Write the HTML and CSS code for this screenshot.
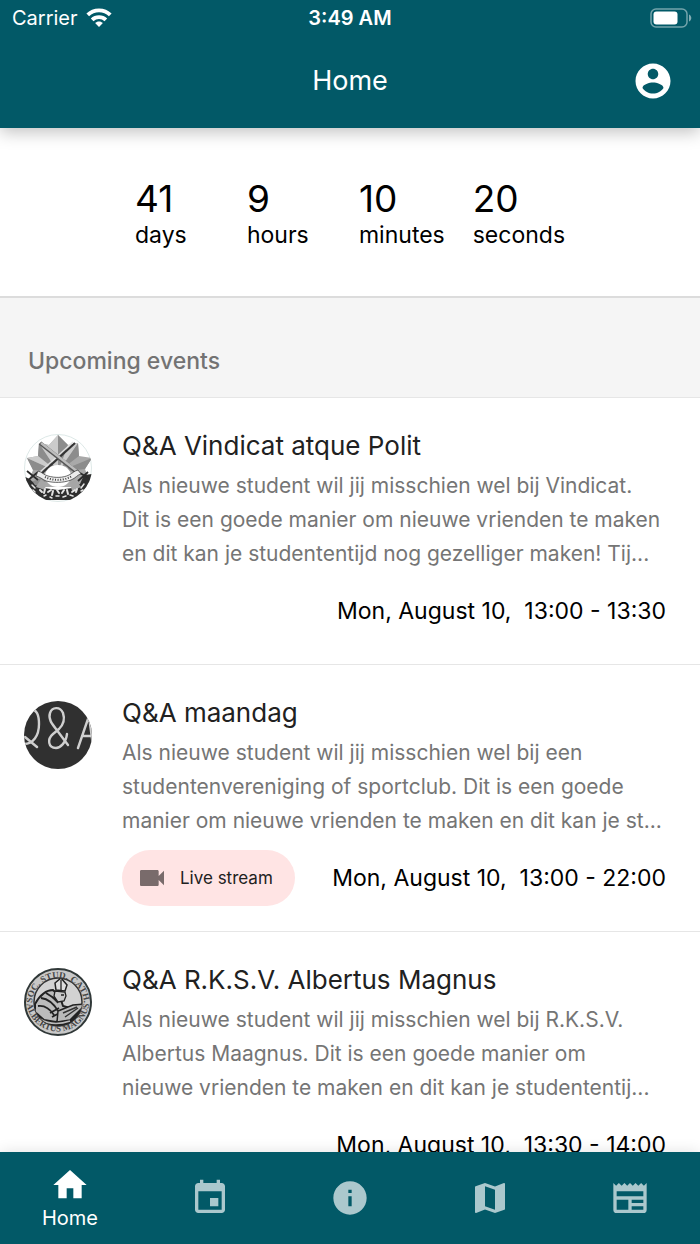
FILE: index.html
```html
<!DOCTYPE html>
<html lang="nl">
<head>
    <meta charset="UTF-8">
    <meta name="viewport" content="width=device-width, initial-scale=1.0">
    <title>Home</title>
    <link rel="stylesheet" href="styles.css">
</head>
<body>
    <header class="app-header">
        <div class="status-bar">
            <div class="carrier">
                <span>Carrier</span>
                <svg class="wifi" viewBox="0 0 26 20" aria-hidden="true">
                    <path d="M13 .5C8 .5 3.600 2.400.4 5.500l2.700 2.800a14 14 0 0 1 19.800 0L25.600 5.500C22.400 2.400 18 .5 13 .5z"/>
                    <path d="M13 7.300c-3.200 0-6.100 1.200-8.200 3.200l2.700 2.700a7.800 7.800 0 0 1 11 0l2.700-2.700A11.900 11.900 0 0 0 13 7.300z"/>
                    <path d="M13 13.600c-1.500 0-2.900.6-3.900 1.500L13 19l3.900-3.900c-1-.9-2.400-1.500-3.900-1.500z"/>
                </svg>
            </div>
            <span class="clock">3:49 AM</span>
            <svg class="battery" viewBox="0 0 42 20" aria-hidden="true">
                <rect x="1" y="1" width="36" height="18" rx="5" fill="none" stroke="#fff" stroke-opacity=".45" stroke-width="1.500"/>
                <rect x="3.500" y="3.500" width="24" height="13" rx="3" fill="#fff"/>
                <path d="M39 6.500c1.500.6 2.300 2 2.300 3.500s-.8 2.900-2.300 3.500z" fill="#fff" fill-opacity=".5"/>
            </svg>
        </div>
        <div class="toolbar">
            <h1>Home</h1>
            <button class="account" type="button" aria-label="Account">
                <svg viewBox="0 0 24 24" aria-hidden="true"><path d="M12 2C6.480 2 2 6.480 2 12s4.480 10 10 10 10-4.480 10-10S17.520 2 12 2zm0 3c1.660 0 3 1.340 3 3s-1.340 3-3 3-3-1.340-3-3 1.340-3 3-3zm0 14.200c-2.500 0-4.710-1.280-6-3.220.03-1.990 4-3.080 6-3.080 1.990 0 5.970 1.090 6 3.080-1.290 1.940-3.500 3.220-6 3.220z"/></svg>
            </button>
        </div>
    </header>

    <main class="content">
        <section class="countdown">
            <div class="unit"><span class="value">41</span><span class="label">days</span></div>
            <div class="unit"><span class="value">9</span><span class="label">hours</span></div>
            <div class="unit"><span class="value">10</span><span class="label">minutes</span></div>
            <div class="unit"><span class="value">20</span><span class="label">seconds</span></div>
        </section>

        <h2 class="section-title">Upcoming events</h2>

        <article class="event">
            <!-- silver star with crossed swords -->
            <svg class="avatar" viewBox="0 0 68 68" aria-hidden="true">
                <defs>
                    <clipPath id="round"><circle cx="34" cy="34" r="34"/></clipPath>
                </defs>
                <circle cx="34" cy="34" r="33.500" fill="#fff" stroke="#cfdedd" stroke-width=".7"/>
                <g clip-path="url(#round)">
                    <path d="M34 1l10 10 10-2 1 13 13 2-7 11 5 14-12 4H14L4 49l5-13-6-12 11-2 1-13 10 2z" fill="#a9a9a9"/>
                    <g fill="#8c8c8c">
                        <path d="M34 1l10 10-10 27zM54 9l1 13-21 16zM68 24l-7 11-27 3zM15 9l-1 13 20 16zM3 24l6 12 25 2zM4 49l10 4 20-15z"/>
                    </g>
                    <g fill="#cbcbcb">
                        <path d="M34 1l-9 10 9 27zM15 9l10 2 9 27zM3 24l11-2 20 16zM54 9l-10 2-10 27z"/>
                    </g>
                    <path d="M51 9L17 40" stroke="#333" stroke-width="2.200"/>
                    <path d="M49 8L16 38" stroke="#e2e2e2" stroke-width="1.200"/>
                    <path d="M16 9l38 30" stroke="#555" stroke-width="4"/>
                    <path d="M17 9l37 29" stroke="#bdbdbd" stroke-width="2.400"/>
                    <ellipse cx="34" cy="42" rx="13" ry="11" fill="#fff"/>
                    <path d="M1 43c6 2 8 5 10 8l9 3 14 2 14-2 8-4 4-9 8-1-3 16-8 6-8 4H20l-8-5-8-6z" fill="#2e2e2e"/>
                    <path d="M17 45l5 4-1 7-9-3zM51 45l-5 4 2 8 9-4z" fill="#a6a6a6"/>
                    <path d="M3 37l11 9M14 38L3 47M64 38l-10 9M66 45l-10-6" stroke="#2b2b2b" stroke-width="1.800"/>
                    <path d="M14 37c4 1 6 4 10 5 7 2 15 2 21-1 4-2 5-4 9-5l3 4c-4 1-5 4-10 6-8 3-17 3-25 1-4-2-6-4-10-5z" fill="#ececec" stroke="#444" stroke-width=".8"/>
                    <path d="M21 43c8 4 19 4 27-1" fill="none" stroke="#444" stroke-width="2" stroke-dasharray="1 1.600"/>
                    <g fill="none" stroke="#e4e4e4" stroke-linecap="round">
                        <path d="M16 56l2 2M21 55l-1 4M24 58l3-2M29 57l-1 4M33 56l2 3M38 59l2-3M43 56l1 4M48 58l3-2M53 55l-1 3" stroke-width="2"/>
                        <path d="M20 62l2-1M26 63l2 1M32 62h3M39 63l3-1M46 61l3 1M8 51l3 3M60 50l-3 4M57 57l2-1M11 58l-2-2" stroke-width="1.500"/>
                    </g>
                </g>
            </svg>
            <div class="event-body">
                <h3>Q&amp;A Vindicat atque Polit</h3>
                <p>Als nieuwe student wil jij misschien wel bij Vindicat. Dit is een goede manier om nieuwe vrienden te maken en dit kan je studententijd nog gezelliger maken! Tij...</p>
                <div class="event-footer">
                    <time datetime="2020-08-10T13:00">Mon, August 10,&nbsp; 13:00 - 13:30</time>
                </div>
            </div>
        </article>

        <article class="event">
            <!-- chalk lettering on a blackboard -->
            <svg class="avatar" viewBox="0 0 68 68" aria-hidden="true">
                <circle cx="34" cy="34" r="34" fill="#303030"/>
                <g clip-path="url(#round)" fill="none" stroke="#cfcfcf" stroke-width="2.400" stroke-linecap="round">
                    <path d="M6 9c7-2 9 6 9 14C15 35 9 43 0 43M1 36l12 10"/>
                    <path d="M43 33c-1 9-7 14-11 14-8 0-9-9-3-14l6-5c5-5 6-10 4-16-3-7-11-6-13 0-2 6 2 11 6 16l12 16"/>
                    <path d="M54 47l11-32 4 30M58 35h10"/>
                </g>
            </svg>
            <div class="event-body">
                <h3>Q&amp;A maandag</h3>
                <p>Als nieuwe student wil jij misschien wel bij een studentenvereniging of sportclub. Dit is een goede manier om nieuwe vrienden te maken en dit kan je st...</p>
                <div class="event-footer">
                    <button class="chip" type="button">
                        <svg viewBox="0 0 24 24" aria-hidden="true"><path d="M17 10.500V7c0-.55-.45-1-1-1H4c-.55 0-1 .45-1 1v10c0 .55.45 1 1 1h12c.55 0 1-.45 1-1v-3.500l4 4v-11l-4 4z"/></svg>
                        Live stream
                    </button>
                    <time datetime="2020-08-10T13:00">Mon, August 10,&nbsp; 13:00 - 22:00</time>
                </div>
            </div>
        </article>

        <article class="event">
            <!-- round seal with a bishop -->
            <svg class="avatar" viewBox="0 0 68 68" aria-hidden="true">
                <defs>
                    <path id="seal-top" d="M8 36a26 26 0 0 1 52 0"/>
                    <path id="seal-bottom" d="M2.500 32a31.500 31.500 0 0 0 63 0"/>
                    <clipPath id="seal"><circle cx="34" cy="34" r="24"/></clipPath>
                </defs>
                <circle cx="34" cy="34" r="33" fill="#c8c8c8" stroke="#303838" stroke-width="2"/>
                <circle cx="34" cy="34" r="24" fill="#d2d2d2" stroke="#333" stroke-width="1.500"/>
                <g class="seal-text">
                    <text><textPath href="#seal-top" startOffset="50%" text-anchor="middle">SOC. STUD. CATH.</textPath></text>
                    <text><textPath href="#seal-bottom" startOffset="50%" text-anchor="middle">ALBERTUS MAGNUS</textPath></text>
                </g>
                <g clip-path="url(#seal)">
                    <path d="M8 38l12 6 13 8 11 1 16-15v24H8z" fill="#222"/>
                    <path d="M11 36c5-9 11-14 18-14l7 7 3 9 7 2-3 9-11 5-12-2-9-8z" fill="#bbb" stroke="#222" stroke-width="2"/>
                    <path d="M17 30c8 1 13 6 17 13M14 38c7-1 12 3 16 9M22 25l11 7M26 45l9-5M28 49l13-7" fill="none" stroke="#222" stroke-width="1.800"/>
                    <path d="M32 22l-1-7 6-5 6 7-2 6z" fill="#ddd" stroke="#222" stroke-width="1.500"/>
                    <path d="M31 23l10 1 1 4-2 5-6 1-4-6z" fill="#c9c9c9" stroke="#222" stroke-width="1.300"/>
                    <path d="M37 12v10M37 27h3M28 29l6 6" stroke="#222" stroke-width="1.300"/>
                    <path d="M34 43l15-6 13-1-16 16-13 2z" fill="#bbb" stroke="#222" stroke-width="1.500"/>
                    <path d="M39 45l14-6M41 49l13-9" stroke="#333" stroke-width="1.500"/>
                    <path d="M16 51c8 5 18 6 30 2" fill="none" stroke="#bbb" stroke-width="1.500"/>
                </g>
            </svg>
            <div class="event-body">
                <h3>Q&amp;A R.K.S.V. Albertus Magnus</h3>
                <p>Als nieuwe student wil jij misschien wel bij R.K.S.V. Albertus Maagnus. Dit is een goede manier om nieuwe vrienden te maken en dit kan je studententij...</p>
                <div class="event-footer">
                    <time datetime="2020-08-10T13:30">Mon, August 10,&nbsp; 13:30 - 14:00</time>
                </div>
            </div>
        </article>
    </main>

    <nav class="tab-bar">
        <a class="tab active" href="#home">
            <svg viewBox="0 0 24 24" aria-hidden="true"><path d="M10 20v-6h4v6h5v-8h3L12 3 2 12h3v8z"/></svg>
            <span>Home</span>
        </a>
        <a class="tab" href="#agenda" aria-label="Agenda">
            <svg viewBox="0 0 24 24" aria-hidden="true"><path d="M17 12h-5v5h5v-5zM16 1v2H8V1H6v2H5c-1.110 0-1.990.9-1.990 2L3 19c0 1.100.89 2 2 2h14c1.100 0 2-.9 2-2V5c0-1.100-.9-2-2-2h-1V1h-2zm3 18H5V8h14v11z"/></svg>
        </a>
        <a class="tab" href="#info" aria-label="Info">
            <svg viewBox="0 0 24 24" aria-hidden="true"><path d="M12 2C6.480 2 2 6.480 2 12s4.480 10 10 10 10-4.480 10-10S17.520 2 12 2zm1 15h-2v-6h2v6zm0-8h-2V7h2v2z"/></svg>
        </a>
        <a class="tab" href="#map" aria-label="Map">
            <svg viewBox="0 0 24 24" aria-hidden="true"><path d="M20.500 3l-.16.03L15 5.100 9 3 3.360 4.900c-.21.07-.36.25-.36.48V20.500c0 .28.22.5.5.5l.16-.03L9 18.900l6 2.100 5.640-1.900c.21-.07.36-.25.36-.48V3.500c0-.28-.22-.5-.5-.5zM15 19l-6-2.110V5l6 2.110V19z"/></svg>
        </a>
        <a class="tab" href="#news" aria-label="News">
            <svg viewBox="0 0 24 24" aria-hidden="true"><path d="M20 11H4V8h16M20 15h-7v-2h7M20 19h-7v-2h7M11 19H4v-6h7M20.330 4.670L18.670 3 17 4.670 15.330 3l-1.660 1.670L12 3l-1.670 1.670L8.670 3 7 4.670 5.330 3 3.670 4.670 2 3v16a2 2 0 0 0 2 2h16a2 2 0 0 0 2-2V3z" fill-rule="evenodd"/></svg>
        </a>
    </nav>
</body>
</html>
```

FILE: styles.css
```css
* {
    margin: 0;
    padding: 0;
    box-sizing: border-box;
}

body {
    font-family: Inter, 'Liberation Sans', sans-serif;
    background: #fff;
    color: #000;
    height: 100vh;
    display: flex;
    flex-direction: column;
}

button {
    font: inherit;
    border: none;
    cursor: pointer;
}

/* Header */
.app-header {
    background: #025967;
    color: #fff;
    box-shadow: 0 4px 16px rgba(0, 0, 0, 0.25);
    z-index: 1;
}

.status-bar {
    display: grid;
    grid-template-columns: 1fr auto 1fr;
    align-items: center;
    height: 36px;
    padding: 0 8px;
    font-size: 20px;
}

.carrier {
    display: flex;
    align-items: center;
    gap: 8px;
    padding-left: 4px;
}

.wifi {
    width: 26px;
    height: 20px;
    fill: #fff;
}

.clock {
    font-weight: 600;
}

.battery {
    width: 42px;
    height: 20px;
    justify-self: end;
}

.toolbar {
    display: grid;
    grid-template-columns: 1fr auto 1fr;
    align-items: center;
    padding: 24px 26px 26px;
}

.toolbar h1 {
    grid-column: 2;
    font-size: 27px;
    font-weight: 400;
    line-height: 32px;
}

.account {
    justify-self: end;
    width: 42px;
    height: 42px;
    background: none;
}

.account svg {
    display: block;
    fill: #fff;
}

/* Scroll area */
.content {
    flex: 1;
    min-height: 0;
    overflow: hidden;
}

.countdown {
    display: flex;
    justify-content: center;
    gap: 28px;
    padding: 49px 24px 47px;
    border-bottom: 2px solid #dcdcdc;
}

.unit {
    display: flex;
    flex-direction: column;
    min-width: 84px;
}

.value {
    font-size: 37px;
    line-height: 44px;
}

.label {
    font-size: 23px;
    line-height: 28px;
}

.section-title {
    padding: 48px 28px 21px;
    background: #f5f5f5;
    color: #737373;
    font-size: 23px;
    font-weight: 500;
    line-height: 30px;
}

.event {
    display: flex;
    gap: 30px;
    padding: 31px 24px 25px;
    border-top: 1px solid #e6e6e6;
}

.avatar {
    flex: none;
    width: 68px;
    height: 68px;
    margin-top: 5px;
}

.seal-text {
    font-family: 'Liberation Serif', serif;
    font-size: 9px;
    font-weight: 700;
    fill: #444;
}

.event-body {
    flex: 1;
    min-width: 0;
}

.event h3 {
    font-size: 26px;
    font-weight: 400;
    line-height: 34px;
    color: #212121;
}

.event p {
    margin: 6px 0 12px;
    padding-right: 14px;
    font-size: 21px;
    line-height: 34px;
    color: #757575;
}

.event-footer {
    display: flex;
    align-items: center;
    height: 56px;
    padding-right: 10px;
}

.event-footer time {
    margin-left: auto;
    font-size: 23px;
    white-space: nowrap;
}

.chip {
    display: flex;
    align-items: center;
    gap: 12px;
    height: 56px;
    padding: 0 22px 0 14px;
    border-radius: 28px;
    background: #ffe4e4;
    color: #212121;
    font-size: 17px;
}

.chip svg {
    width: 32px;
    fill: #796b6b;
}

/* Bottom navigation */
.tab-bar {
    display: flex;
    height: 92px;
    background: #025967;
    box-shadow: 0 0 14px rgba(0, 0, 0, 0.12);
    z-index: 1;
}

.tab {
    flex: 1;
    display: flex;
    flex-direction: column;
    align-items: center;
    justify-content: center;
    color: #abc8cd;
    font-size: 20px;
    line-height: 26px;
    text-decoration: none;
}

.tab svg {
    width: 40px;
    height: 40px;
    fill: currentColor;
}

.tab.active {
    color: #fff;
}
```
